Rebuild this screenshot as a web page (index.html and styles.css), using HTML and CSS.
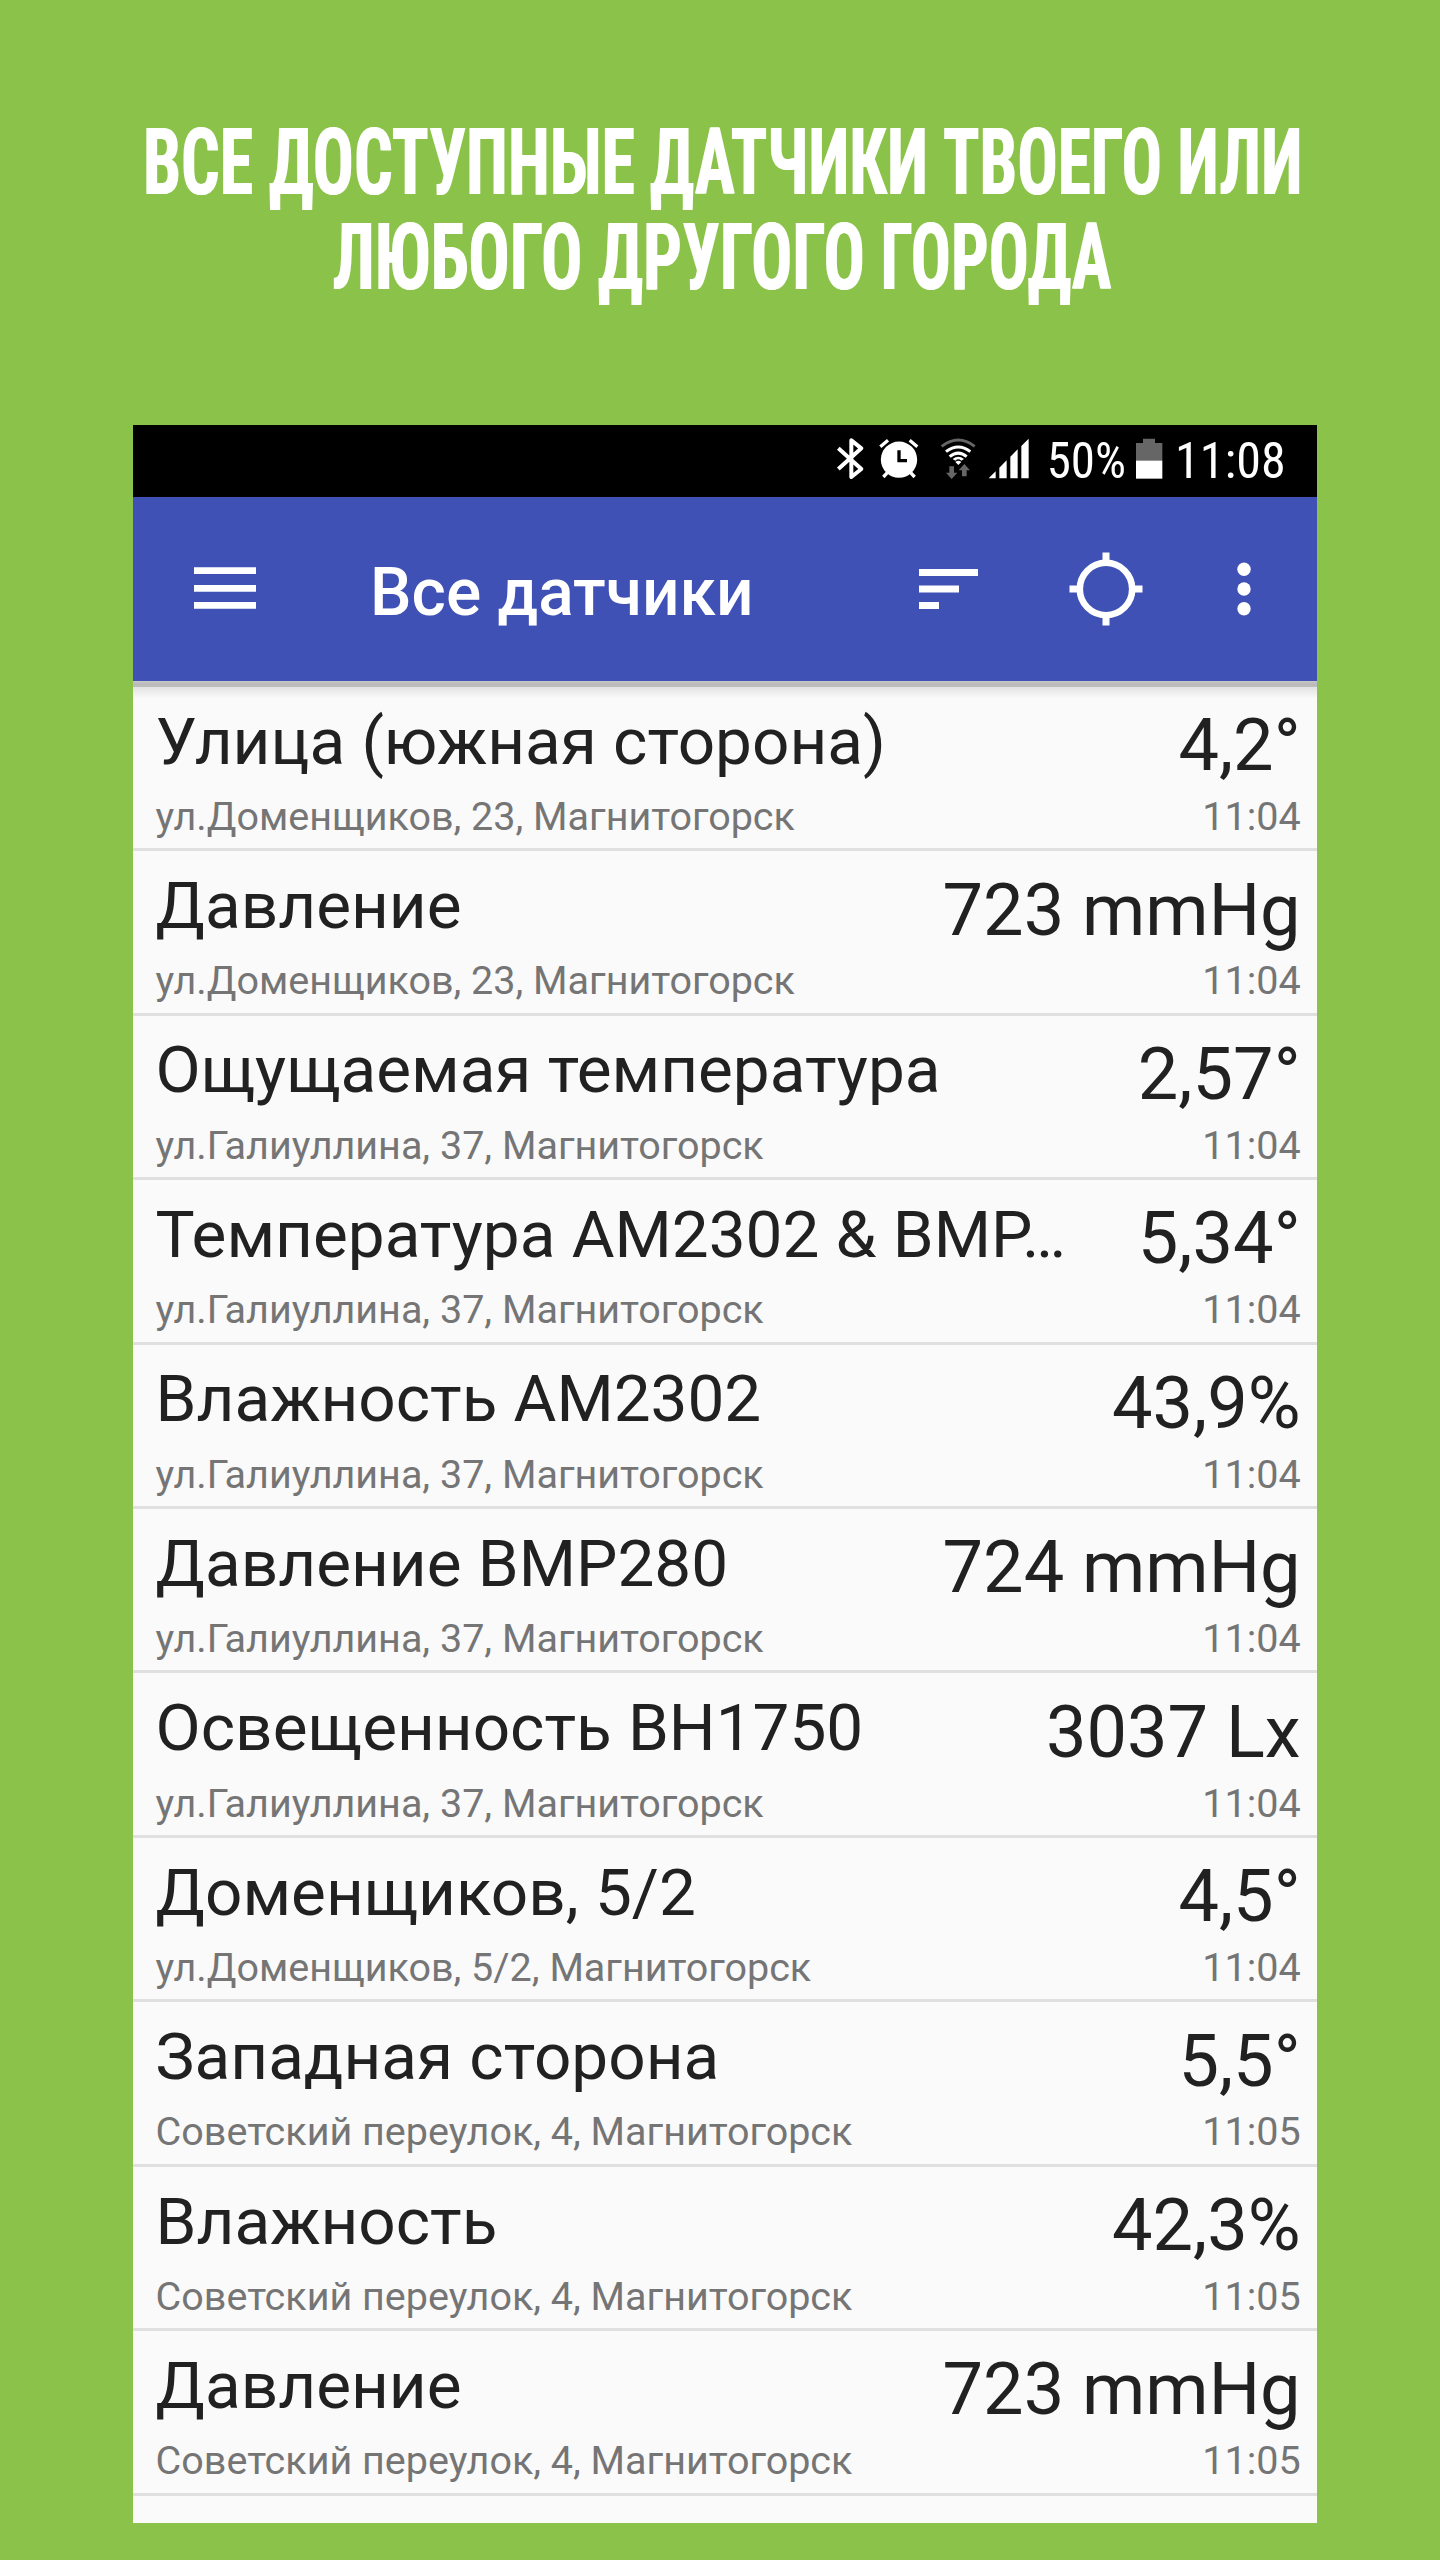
FILE: index.html
```html
<!DOCTYPE html>
<html lang="ru">
<head>
<meta charset="utf-8">
<title>Все датчики</title>
<link rel="stylesheet" href="styles.css">
</head>
<body>
<h1 class="headline">
  <svg class="headline-art" viewBox="0 0 1440 425">
    <text x="142.500" y="194" textLength="110" lengthAdjust="spacingAndGlyphs">ВСЕ</text>
    <text x="268.500" y="194" textLength="366" lengthAdjust="spacingAndGlyphs">ДОСТУПНЫЕ</text>
    <text x="649.500" y="194" textLength="278" lengthAdjust="spacingAndGlyphs">ДАТЧИКИ</text>
    <text x="942.500" y="194" textLength="219" lengthAdjust="spacingAndGlyphs">ТВОЕГО</text>
    <text x="1177" y="194" textLength="125" lengthAdjust="spacingAndGlyphs">ИЛИ</text>
    <text x="332" y="289" textLength="250" lengthAdjust="spacingAndGlyphs">ЛЮБОГО</text>
    <text x="597.500" y="289" textLength="267" lengthAdjust="spacingAndGlyphs">ДРУГОГО</text>
    <text x="880" y="289" textLength="231" lengthAdjust="spacingAndGlyphs">ГОРОДА</text>
  </svg>
</h1>
<main class="phone">
  <div class="status">
    <svg width="35" height="43.33" viewBox="45 50 105 130"><path d="M55 84L124 146L94 170V60L124 84L55 146" fill="none" stroke="#fff" stroke-width="12" stroke-linejoin="round"/></svg>
    <svg width="60" height="43.33" viewBox="150 50 180 130"><g fill="none" stroke="#fff" stroke-width="10"><path d="M181 79L204 60M292 79L269 60M202 157L190 170M272 157L284 170"/></g><circle cx="237" cy="118" r="54.500" fill="#fff"/><path d="M237 90V121H261" fill="none" stroke="#000" stroke-width="10"/></svg>
    <svg width="53.33" height="43.33" viewBox="330 50 160 130"><g fill="none" stroke-width="9"><path d="M365 78Q415 40 464 78" stroke="#666"/><path d="M378 94Q415 66 451 94M389 109Q415 88 440 109" stroke="#fff"/></g><path d="M398 116Q415 102 432 116L424 121Q415 113 406 121ZM406 125Q415 118 424 125L415 134Z" fill="#fff"/><path d="M388 138H402V157H412L395 176L378 157H388ZM426 168H440V150H450L433 131L416 150H426Z" fill="#666"/></svg>
    <svg width="53.33" height="43.33" viewBox="490 50 160 130"><path d="M507 174L528 153V174ZM539 142L561 120V174H539ZM572 109L594 87V174H572ZM605 77L627 55V174H605Z" fill="#fff"/></svg>
    <svg width="93.33" height="43.33" viewBox="650 50 280 130"><text x="679" y="172" textLength="238" lengthAdjust="spacingAndGlyphs">50%</text></svg>
    <svg width="40" height="43.33" viewBox="930 50 120 130"><path d="M948 68H969V55H1005V68H1027V122H948Z" fill="#666"/><path d="M948 121H1027V175H948Z" fill="#fff"/></svg>
    <svg width="147" height="43.33" viewBox="1050 50 441 130"><text x="1065" y="172" textLength="332" lengthAdjust="spacingAndGlyphs">11:08</text></svg>
  </div>
  <header class="toolbar">
    <svg class="menu" width="62" height="42" viewBox="0 0 62 42"><path d="M0 .3H62V7H0ZM0 18H62V24.700H0ZM0 35H62V41.700H0Z" fill="#fff"/></svg>
    <h2 class="title">Все датчики</h2>
    <svg class="sort" width="59" height="42" viewBox="0 0 59 42"><path d="M0 1H59V7.900H0ZM0 17.500H40V24.400H0ZM0 34H20V41H0Z" fill="#fff"/></svg>
    <svg class="locate" width="74" height="74" viewBox="-37 -37 74 74"><circle r="26.200" fill="none" stroke="#fff" stroke-width="6.600"/><path d="M0-36.500V-28M0 28V36.500M-36.500 0H-28M28 0H36.500" stroke="#fff" stroke-width="7"/></svg>
    <svg class="more" width="14" height="54" viewBox="-7 -27 14 54"><g fill="#fff"><circle cy="-19.700" r="6.700"/><circle r="6.700"/><circle cy="19.700" r="6.700"/></g></svg>
  </header>
  <section class="list">
    <article class="row"><div class="name">Улица (южная сторона)</div><div class="value">4,2°</div><div class="sub">ул.Доменщиков, 23, Магнитогорск</div><div class="time">11:04</div></article>
    <article class="row"><div class="name">Давление</div><div class="value">723 mmHg</div><div class="sub">ул.Доменщиков, 23, Магнитогорск</div><div class="time">11:04</div></article>
    <article class="row"><div class="name">Ощущаемая температура</div><div class="value">2,57°</div><div class="sub">ул.Галиуллина, 37, Магнитогорск</div><div class="time">11:04</div></article>
    <article class="row"><div class="name">Температура AM2302 &amp; BMP…</div><div class="value">5,34°</div><div class="sub">ул.Галиуллина, 37, Магнитогорск</div><div class="time">11:04</div></article>
    <article class="row"><div class="name">Влажность AM2302</div><div class="value">43,9%</div><div class="sub">ул.Галиуллина, 37, Магнитогорск</div><div class="time">11:04</div></article>
    <article class="row"><div class="name">Давление BMP280</div><div class="value">724 mmHg</div><div class="sub">ул.Галиуллина, 37, Магнитогорск</div><div class="time">11:04</div></article>
    <article class="row"><div class="name">Освещенность BH1750</div><div class="value">3037 Lx</div><div class="sub">ул.Галиуллина, 37, Магнитогорск</div><div class="time">11:04</div></article>
    <article class="row"><div class="name">Доменщиков, 5/2</div><div class="value">4,5°</div><div class="sub">ул.Доменщиков, 5/2, Магнитогорск</div><div class="time">11:04</div></article>
    <article class="row"><div class="name">Западная сторона</div><div class="value">5,5°</div><div class="sub">Советский переулок, 4, Магнитогорск</div><div class="time">11:05</div></article>
    <article class="row"><div class="name">Влажность</div><div class="value">42,3%</div><div class="sub">Советский переулок, 4, Магнитогорск</div><div class="time">11:05</div></article>
    <article class="row"><div class="name">Давление</div><div class="value">723 mmHg</div><div class="sub">Советский переулок, 4, Магнитогорск</div><div class="time">11:05</div></article>
  </section>
</main>
</body>
</html>
```
FILE: styles.css
```css
* { box-sizing: border-box; }
body {
  margin: 0;
  height: 2560px;
  background: #8bc34a;
  font-family: Roboto, "Noto Sans", sans-serif;
  overflow: hidden;
}
svg { display: block; flex: none; overflow: visible; }
.headline { margin: 0; height: 425px; }
.headline-art {
  width: 1440px;
  height: 425px;
  fill: #fff;
  font-size: 92.8px;
  font-weight: 700;
  font-stretch: 75%;
  filter: drop-shadow(1px 0 0 #fff);
}
.phone {
  width: 1184px;
  height: 2098px;
  margin-left: 133px;
  background: #fafafa;
  overflow: hidden;
}
.status {
  display: flex;
  height: 72px;
  padding: 11.67px 0 0 702px;
  background: #000;
}
.status text {
  font-size: 149px;
  font-stretch: 75%;
  fill: #fff;
}
.toolbar {
  display: flex;
  align-items: center;
  height: 184px;
  padding-left: 61px;
  background: #3f51b5;
}
.title {
  width: 545px;
  margin: 7px 0 0 113px;
  padding-left: 1px;
  color: #fff;
  font-size: 65.8px;
  font-weight: 500;
  line-height: 80px;
  white-space: nowrap;
}
.menu { margin-bottom: 2px; }
.sort { margin-left: 5px; }
.locate { margin-left: 91px; }
.more { margin-left: 94px; }
.list {
  padding-top: 5.8px;
  background: linear-gradient(#c8c8c8 0, #bababa 3px, #bebebe 5.9px, #e2e2e2 6px, #fafafa 17px);
}
.row {
  display: grid;
  grid-template: 101.4px 56.4px / 1fr auto;
  align-items: start;
  height: 164.44px;
  padding: 3.8px 16.4px 0 22.6px;
  border-bottom: 3.3px solid #e0e0e0;
  white-space: nowrap;
}
.name { font-size: 65.65px; line-height: 101.4px; color: #212121; }
.value { margin-top: 4.5px; font-size: 72.15px; line-height: 101.4px; color: #212121; text-align: right; }
.sub, .time { font-size: 39.5px; line-height: 50px; color: #757575; }
.time { text-align: right; }
```
